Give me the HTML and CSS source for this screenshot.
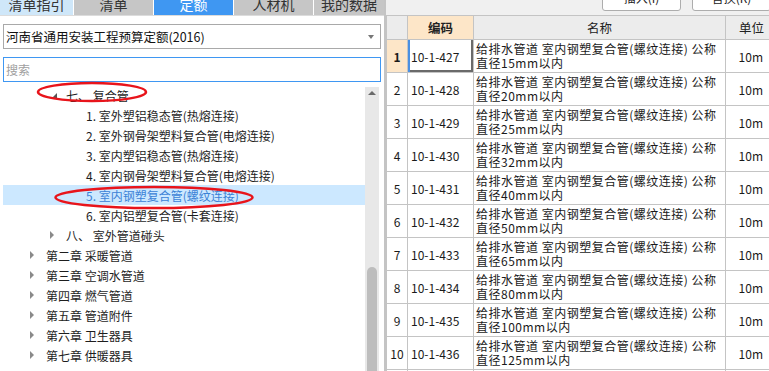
FILE: index.html
```html
<!DOCTYPE html>
<html lang="zh-CN">
<head>
  <meta charset="UTF-8">
  <title>定额</title>
  <link rel="stylesheet" href="styles.css">
</head>
<body>
  <div class="app">
    <!-- 左侧：定额库与章节树 -->
    <div class="left">
      <div class="tabs">
        <div class="tab tab-guide">清单指引</div>
        <div class="tab">清单</div>
        <div class="tab tab-active">定额</div>
        <div class="tab">人材机</div>
        <div class="tab tab-last">我的数据</div>
      </div>

      <div class="panel">
        <div class="select">河南省通用安装工程预算定额(2016)<span class="caret"></span></div>
        <div class="search">搜索</div>

        <div class="tree-wrap">
          <ul class="tree">
            <li class="node lv2"><span class="arrow open"></span>七、 复合管</li>
            <li class="node lv3">1. 室外塑铝稳态管(热熔连接)</li>
            <li class="node lv3">2. 室外钢骨架塑料复合管(电熔连接)</li>
            <li class="node lv3">3. 室内塑铝稳态管(热熔连接)</li>
            <li class="node lv3">4. 室内钢骨架塑料复合管(电熔连接)</li>
            <li class="node lv3 selected">5. 室内钢塑复合管(螺纹连接)</li>
            <li class="node lv3">6. 室内铝塑复合管(卡套连接)</li>
            <li class="node lv2"><span class="arrow"></span>八、 室外管道碰头</li>
            <li class="node lv1"><span class="arrow"></span>第二章 采暖管道</li>
            <li class="node lv1"><span class="arrow"></span>第三章 空调水管道</li>
            <li class="node lv1"><span class="arrow"></span>第四章 燃气管道</li>
            <li class="node lv1"><span class="arrow"></span>第五章 管道附件</li>
            <li class="node lv1"><span class="arrow"></span>第六章 卫生器具</li>
            <li class="node lv1"><span class="arrow"></span>第七章 供暖器具</li>
          </ul>
          <div class="scrollbar">
            <span class="scroll-up"></span>
            <span class="thumb"></span>
          </div>
        </div>
      </div>

      <!-- 红色标注圈 -->
      <svg class="marks" width="384" height="371" viewBox="0 0 384 371">
        <ellipse cx="92" cy="92" rx="54" ry="9" />
        <ellipse cx="154" cy="197.5" rx="98.5" ry="10.5" />
      </svg>
    </div>

    <!-- 右侧：定额子目列表 -->
    <div class="right">
      <div class="toolbar">
        <div class="btn">插入(I)</div>
        <div class="btn">替换(R)</div>
      </div>

      <table class="grid">
        <colgroup>
          <col class="c-no">
          <col class="c-code">
          <col class="c-name">
          <col class="c-unit">
        </colgroup>
        <thead>
          <tr>
            <th></th>
            <th class="th-active">编码</th>
            <th>名称</th>
            <th>单位</th>
          </tr>
        </thead>
        <tbody>
          <tr>
            <td class="no no-active">1</td>
            <td class="code focus">10-1-427</td>
            <td class="name">给排水管道 室内钢塑复合管(螺纹连接) 公称<br>直径15mm以内</td>
            <td class="unit">10m</td>
          </tr>
          <tr>
            <td class="no">2</td>
            <td class="code">10-1-428</td>
            <td class="name">给排水管道 室内钢塑复合管(螺纹连接) 公称<br>直径20mm以内</td>
            <td class="unit">10m</td>
          </tr>
          <tr>
            <td class="no">3</td>
            <td class="code">10-1-429</td>
            <td class="name">给排水管道 室内钢塑复合管(螺纹连接) 公称<br>直径25mm以内</td>
            <td class="unit">10m</td>
          </tr>
          <tr>
            <td class="no">4</td>
            <td class="code">10-1-430</td>
            <td class="name">给排水管道 室内钢塑复合管(螺纹连接) 公称<br>直径32mm以内</td>
            <td class="unit">10m</td>
          </tr>
          <tr>
            <td class="no">5</td>
            <td class="code">10-1-431</td>
            <td class="name">给排水管道 室内钢塑复合管(螺纹连接) 公称<br>直径40mm以内</td>
            <td class="unit">10m</td>
          </tr>
          <tr>
            <td class="no">6</td>
            <td class="code">10-1-432</td>
            <td class="name">给排水管道 室内钢塑复合管(螺纹连接) 公称<br>直径50mm以内</td>
            <td class="unit">10m</td>
          </tr>
          <tr>
            <td class="no">7</td>
            <td class="code">10-1-433</td>
            <td class="name">给排水管道 室内钢塑复合管(螺纹连接) 公称<br>直径65mm以内</td>
            <td class="unit">10m</td>
          </tr>
          <tr>
            <td class="no">8</td>
            <td class="code">10-1-434</td>
            <td class="name">给排水管道 室内钢塑复合管(螺纹连接) 公称<br>直径80mm以内</td>
            <td class="unit">10m</td>
          </tr>
          <tr>
            <td class="no">9</td>
            <td class="code">10-1-435</td>
            <td class="name">给排水管道 室内钢塑复合管(螺纹连接) 公称<br>直径100mm以内</td>
            <td class="unit">10m</td>
          </tr>
          <tr>
            <td class="no">10</td>
            <td class="code">10-1-436</td>
            <td class="name">给排水管道 室内钢塑复合管(螺纹连接) 公称<br>直径125mm以内</td>
            <td class="unit">10m</td>
          </tr>
          <tr>
            <td class="no">11</td>
            <td class="code">10-1-437</td>
            <td class="name">给排水管道 室内钢塑复合管(螺纹连接) 公称<br>直径150mm以内</td>
            <td class="unit">10m</td>
          </tr>
        </tbody>
      </table>
    </div>
  </div>
</body>
</html>
```

FILE: styles.css
```css
/* Page */
body {
  margin: 0;
  font-family: "Noto Sans CJK SC", "Noto Sans", sans-serif;
  font-size: 12px;
  color: #222;
  background: #fff;
}

.app {
  display: flex;
  height: 100vh;
  overflow: hidden;
}

/* Left pane */
.left {
  position: relative;
  width: 384px;
  flex: none;
  background: #fff;
}

.tabs {
  display: flex;
  gap: 1px;
  height: 15px;
  overflow: hidden;
  border-bottom: 1px solid #dcdcdc;
}

.tab {
  width: 79px;
  flex: none;
  background: #c6c6c6;
  color: #333;
  font-size: 14px;
  line-height: 9px;
  text-align: center;
}

.tab-guide {
  width: 73px;
  background: #cfe7f9;
}

.tab-active {
  background: #3f97f2;
  color: #fff;
}

.tab-last {
  flex: 1;
}

.panel {
  padding: 8px 0 0 3px;
}

.select {
  position: relative;
  width: 374px;
  height: 23px;
  border: 1px solid #a9a9a9;
  padding-left: 2px;
  font-size: 12.5px;
  line-height: 23px;
  color: #111;
}

.caret {
  position: absolute;
  right: 6px;
  top: 10px;
  border-top: 4px solid #777;
  border-left: 3px solid transparent;
  border-right: 3px solid transparent;
}

.search {
  width: 374px;
  height: 23px;
  margin-top: 8px;
  border: 1px solid #3f97f2;
  padding-left: 2px;
  line-height: 23px;
  color: #a0a0a0;
}

/* Tree */
.tree-wrap {
  display: flex;
  margin-top: 3px;
  height: 300px;
}

.tree {
  list-style: none;
  margin: 0;
  padding: 0;
  width: 362px;
  flex: none;
}

.node {
  display: flex;
  align-items: center;
  height: 20px;
  white-space: nowrap;
  color: #1e1e1e;
}

.lv1 { padding-left: 25px; }
.lv2 { padding-left: 45px; }
.lv3 { padding-left: 83px; }

.selected {
  background: #cce8ff;
  color: #3b82d6;
}

.arrow {
  width: 18px;
  height: 8px;
  flex: none;
  position: relative;
}

.arrow::before {
  content: "";
  position: absolute;
  left: 2px;
  top: 0;
  border-left: 4px solid #8a8a8a;
  border-top: 4px solid transparent;
  border-bottom: 4px solid transparent;
}

.arrow.open::before {
  left: 4px;
  top: 2px;
  border-left: 5px solid transparent;
  border-top: 0;
  border-bottom: 5px solid #555;
}

.scrollbar {
  position: relative;
  width: 14px;
  margin-top: 2px;
  background: #e8e8e8;
}

.scroll-up {
  position: absolute;
  left: 3px;
  top: 4px;
  border-bottom: 4px solid #6a6a6a;
  border-left: 4px solid transparent;
  border-right: 4px solid transparent;
}

.thumb {
  position: absolute;
  left: 2px;
  right: 2px;
  top: 180px;
  height: 140px;
  background: #bdbdbd;
  border-radius: 5px 5px 0 0;
}

/* Annotation rings */
.marks {
  position: absolute;
  left: 0;
  top: 0;
  pointer-events: none;
}

.marks ellipse {
  fill: none;
  stroke: #e8141b;
  stroke-width: 2.5;
}

/* Right pane */
.right {
  flex: 1;
  min-width: 0;
  overflow: hidden;
  border-left: 2px solid #c4c4c4;
  background: #f0f0f0;
}

.toolbar {
  display: flex;
  gap: 11px;
  height: 15px;
  padding-left: 216px;
  overflow: hidden;
}

.btn {
  width: 77px;
  height: 20px;
  flex: none;
  margin-top: -11px;
  border: 1px solid #adadad;
  border-radius: 3px;
  background: #fff;
  text-align: center;
  line-height: 16px;
  font-size: 12px;
}

.grid {
  width: 391px;
  table-layout: fixed;
  border-collapse: collapse;
  background: #fff;
}

.c-no { width: 21px; }
.c-code { width: 66px; }
.c-name { width: 252px; }
.c-unit { width: 52px; }

.grid th,
.grid td {
  border: 1px solid #c4c4c4;
  padding: 0;
  overflow: hidden;
  white-space: nowrap;
}

.grid th {
  height: 23px;
  background: #ececec;
  font-size: 12.5px;
  font-weight: 400;
  color: #222;
}

.grid th.th-active {
  background: #fde6c8;
  font-weight: 700;
}

.grid td {
  height: 32px;
  vertical-align: middle;
  color: #1a1a1a;
}

.no {
  text-align: center;
  color: #333;
}

.no-active {
  background: #fde6c8;
  font-weight: 700;
}

.code {
  padding-left: 3px !important;
}

.focus {
  box-shadow: inset 2px 0 #4a90e2, inset -2px -2px #6a6a6a;
}

.name {
  padding-left: 2px !important;
  line-height: 14px;
  letter-spacing: 0.5px;
}

.unit {
  text-align: right;
  padding-right: 14px !important;
}
```
